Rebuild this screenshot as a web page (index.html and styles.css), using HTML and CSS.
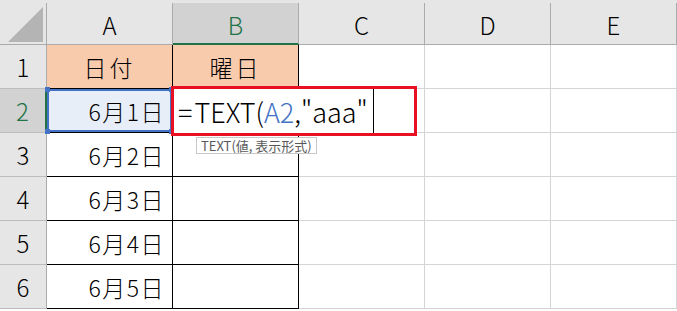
FILE: index.html
```html
<!DOCTYPE html>
<html lang="ja">
<head>
  <meta charset="UTF-8">
  <title>TEXT関数で曜日を表示</title>
  <link rel="stylesheet" href="styles.css">
</head>
<body>
  <div class="sheet">
    <div class="grid">
      <div class="top-strip"></div>

      <div class="corner">
        <svg width="46" height="42" viewBox="0 0 46 42"><polygon points="8,39 43,39 43,4" fill="#b4b4b4"/></svg>
      </div>
      <div class="col-head">A</div>
      <div class="col-head active">B</div>
      <div class="col-head">C</div>
      <div class="col-head">D</div>
      <div class="col-head">E</div>

      <div class="row-head">1</div>
      <div class="cell tbl title">日付</div>
      <div class="cell tbl title">曜日</div>
      <div class="cell"></div>
      <div class="cell"></div>
      <div class="cell"></div>

      <div class="row-head active">2</div>
      <div class="cell tbl date ref">6月1日
        <span class="handle tl"></span><span class="handle tr"></span>
        <span class="handle bl"></span><span class="handle br"></span>
      </div>
      <div class="cell tbl"></div>
      <div class="cell"></div>
      <div class="cell"></div>
      <div class="cell"></div>

      <div class="row-head">3</div>
      <div class="cell tbl date">6月2日</div>
      <div class="cell tbl"></div>
      <div class="cell"></div>
      <div class="cell"></div>
      <div class="cell"></div>

      <div class="row-head">4</div>
      <div class="cell tbl date">6月3日</div>
      <div class="cell tbl"></div>
      <div class="cell"></div>
      <div class="cell"></div>
      <div class="cell"></div>

      <div class="row-head">5</div>
      <div class="cell tbl date">6月4日</div>
      <div class="cell tbl"></div>
      <div class="cell"></div>
      <div class="cell"></div>
      <div class="cell"></div>

      <div class="row-head">6</div>
      <div class="cell tbl date">6月5日</div>
      <div class="cell tbl"></div>
      <div class="cell"></div>
      <div class="cell"></div>
      <div class="cell"></div>
    </div>

    <div class="editor">
      <span class="formula"><span class="eq">=</span>TEXT(<span class="ref-text">A2</span>,"aaa"</span><span class="caret"></span>
    </div>
    <div class="hint">TEXT(値, 表示形式)</div>
  </div>
</body>
</html>
```

FILE: styles.css
```css
* {
  box-sizing: border-box;
}
body {
  margin: 0;
  background-color: #ffffff;
  font-family: "Noto Sans CJK JP", "Noto Sans", sans-serif;
  font-weight: 300;
  color: #000;
}
.sheet {
  position: relative;
  width: 677px;
  height: 311px;
  overflow: hidden;
}
.grid {
  display: grid;
  grid-template-columns: 47px repeat(5, 126px);
  grid-template-rows: 3px 42px repeat(6, 44px);
}
.top-strip {
  grid-column: 1 / -1;
  background-color: #e6e6e6;
}
.corner {
  background-color: #e6e6e6;
  border-right: 1px solid #ababab;
  border-bottom: 1px solid #ababab;
}
.corner svg {
  display: block;
}
.col-head {
  display: flex;
  align-items: center;
  justify-content: center;
  background-color: #e6e6e6;
  border-right: 1px solid #ababab;
  border-bottom: 1px solid #ababab;
  font-size: 24px;
  padding-top: 2px;
}
.col-head.active {
  background-color: #d2d2d2;
  color: #217346;
  border-bottom: 2px solid #217346;
}
.row-head {
  display: flex;
  align-items: center;
  justify-content: center;
  background-color: #e6e6e6;
  border-right: 1px solid #ababab;
  border-bottom: 1px solid #bcbcbc;
  font-size: 24px;
}
.row-head.active {
  background-color: #d2d2d2;
  color: #217346;
  border-right: 2px solid #217346;
}
.cell {
  display: flex;
  align-items: center;
  border-right: 1px solid #d4d4d4;
  border-bottom: 1px solid #d4d4d4;
  font-size: 23px;
}
.cell.tbl {
  border-right-color: #000;
  border-bottom-color: #000;
}
.cell.title {
  justify-content: center;
  background-color: #f8cbad;
  letter-spacing: 3px;
}
.cell.date {
  justify-content: flex-end;
  padding-right: 7px;
  letter-spacing: 1.5px;
}
.cell.ref {
  position: relative;
  background-color: #e8eef8;
  box-shadow: inset 0 0 0 2px #4472c4;
}
.handle {
  position: absolute;
  width: 5px;
  height: 5px;
  background-color: #4472c4;
}
.handle.tl { left: -2px; top: -2px; }
.handle.tr { right: -2px; top: -2px; }
.handle.bl { left: -2px; bottom: -2px; }
.handle.br { right: -2px; bottom: -2px; }

.editor {
  position: absolute;
  left: 171px;
  top: 86px;
  width: 246px;
  height: 50px;
  border: 3px solid #e81123;
  background-color: #ffffff;
  display: flex;
  align-items: center;
  padding-left: 4px;
}
.formula {
  font-size: 27px;
  white-space: nowrap;
}
.eq {
  margin-right: 2px;
}
.ref-text {
  color: #4472c4;
}
.caret {
  align-self: stretch;
  width: 1px;
  margin-left: 5px;
  background-color: #000;
}
.hint {
  position: absolute;
  left: 196px;
  top: 137px;
  height: 17px;
  padding: 0 4px;
  border: 1px solid #c8c8c8;
  background-color: #ffffff;
  color: #595959;
  font-size: 13px;
  font-weight: 400;
  line-height: 15px;
  white-space: nowrap;
}
```
